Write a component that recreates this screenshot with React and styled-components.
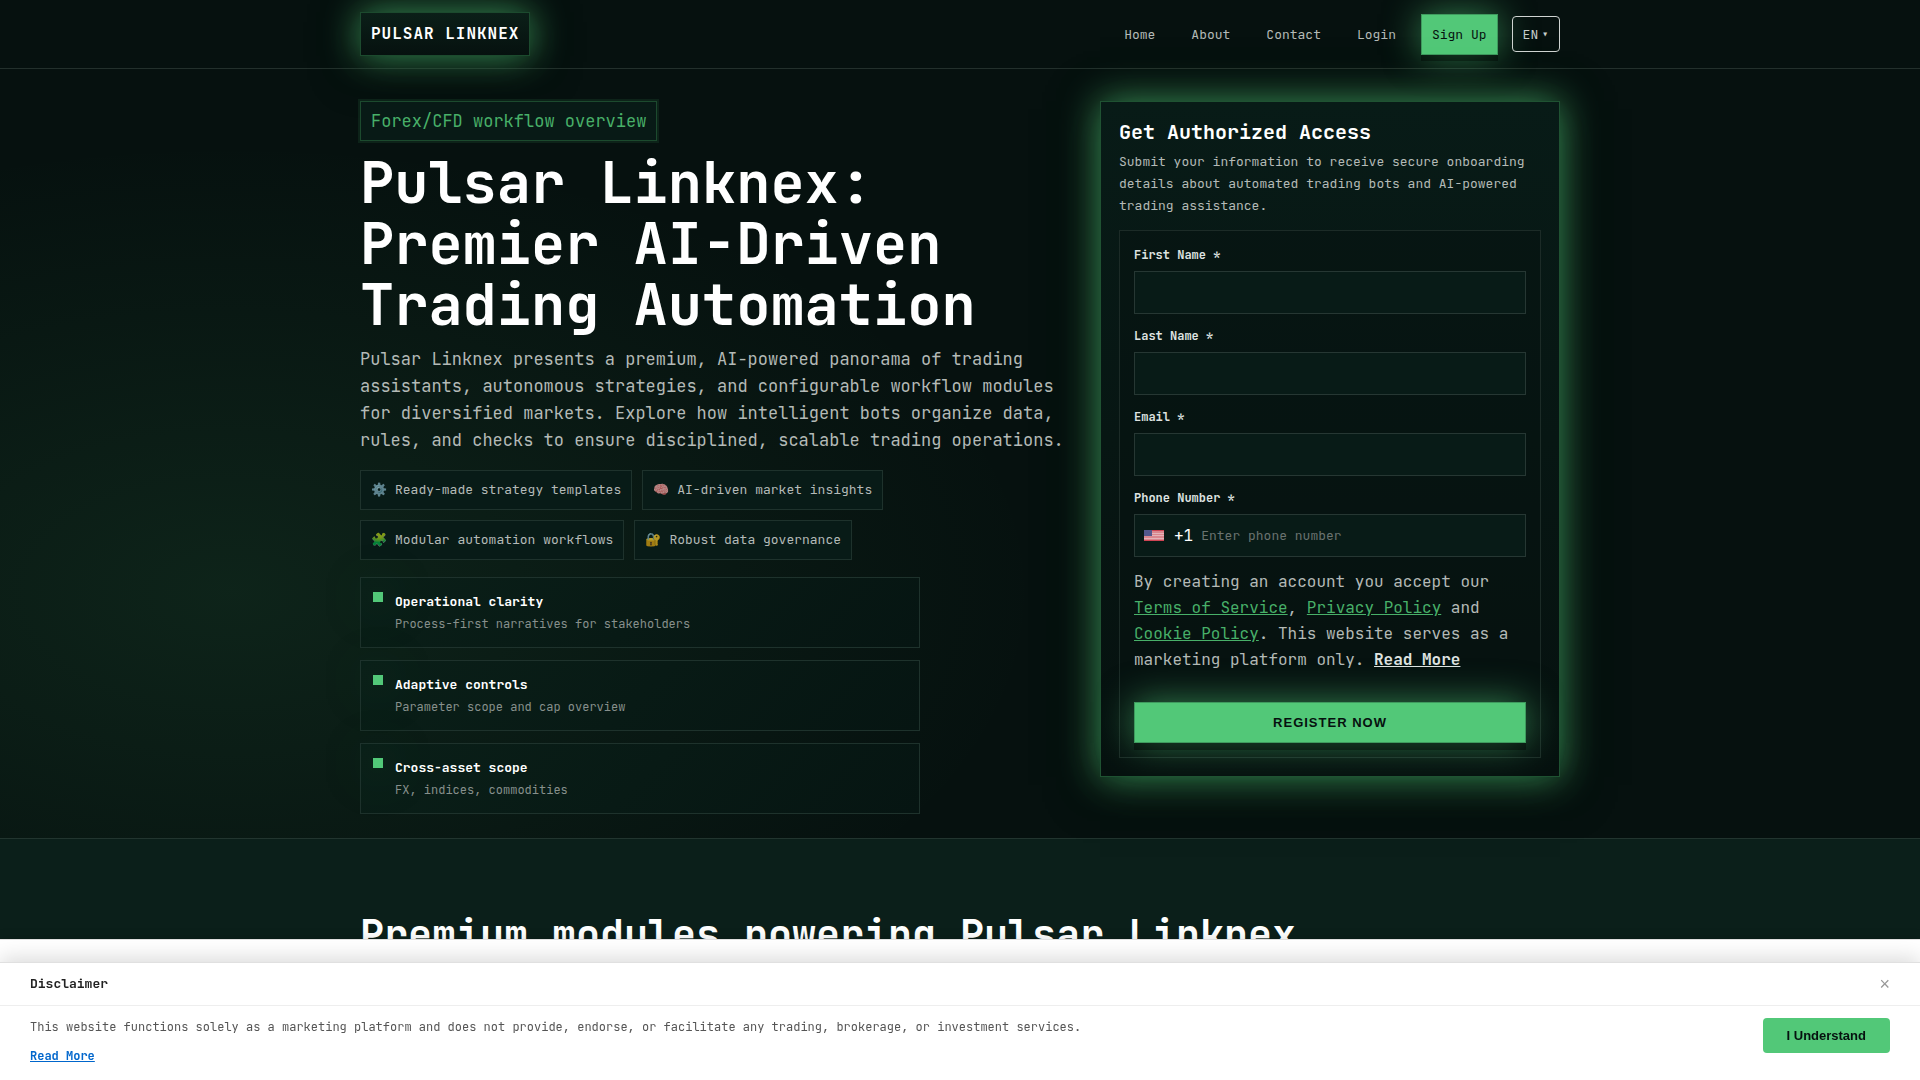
import { useState } from 'react'
import styled, { createGlobalStyle, css } from 'styled-components'

const mono = `'JetBrains Mono', 'DejaVu Sans Mono', monospace`
const sans = `'Liberation Sans', Arial, sans-serif`

const GlobalStyle = createGlobalStyle`
    * {
        box-sizing: border-box;
    }
    body {
        margin: 0;
        overflow: hidden;
        background: #06110f;
        color: #b4bab7;
        font-family: ${mono};
        font-size: 16px;
        line-height: 1.65;
    }
    h1, h2, h3, p, ul {
        margin: 0;
        padding: 0;
    }
`

const glow = css`
    box-shadow: 0 0 36px rgba(82, 200, 120, 0.7), 0 8px 48px rgba(0, 20, 10, 0.5);
`

const Container = styled.div`
    width: 100%;
    max-width: 1200px;
    margin: 0 auto;
`

const Page = styled.div`
    height: 100vh;
    overflow: hidden;
`

const HeaderBar = styled.header`
    padding: 12px 0;
    border-bottom: 1px solid #23302c;
    background: #06110f;
`

const HeaderRow = styled(Container)`
    display: flex;
    justify-content: space-between;
    align-items: center;
`

const Logo = styled.a`
    ${glow}
    padding: 8px 10px;
    border: 1px solid #1c4a2e;
    background: linear-gradient(180deg, #0b1f18, #06110f);
    color: white;
    font-weight: 700;
    line-height: 26px;
    letter-spacing: 1px;
    text-decoration: none;
`

const Nav = styled.nav`
    display: flex;
    align-items: center;
    gap: 14px;
`

const NavLink = styled.a`
    padding: 8px 10px;
    border: 1px solid transparent;
    color: #b4bab7;
    font-size: 13px;
    line-height: 23px;
    text-decoration: none;
`

const SignUp = styled(NavLink)`
    border-color: #3f9a5e;
    background: #52c878;
    color: #06110f;
    box-shadow: 0 6px 0 rgba(0, 0, 0, 0.35), 0 0 36px rgba(82, 200, 120, 0.6);
`

const LangButton = styled.button`
    display: flex;
    align-items: center;
    gap: 3px;
    height: 36px;
    padding: 0 10px;
    border: 1px solid #d0d4d2;
    border-radius: 4px;
    background: transparent;
    color: #c8cdca;
    font-family: ${mono};
    font-size: 13px;
`

const Caret = styled.span`
    font-size: 13px;
`

const Hero = styled.section`
    padding: 32px 0 24px;
    background:
        radial-gradient(900px 500px at 12% 68%, rgba(82, 200, 120, 0.1), transparent 90%),
        #06110f;
`

const HeroGrid = styled(Container)`
    display: grid;
    grid-template-columns: minmax(0, 1fr) 460px;
    gap: 36px;
    align-items: start;
`

const HeroText = styled.div`
    display: flex;
    flex-direction: column;
    align-items: flex-start;
`

const Eyebrow = styled.span`
    padding: 6px 10px;
    border: 1px solid #1c4a2e;
    box-shadow: 0 0 0 2px rgba(82, 200, 120, 0.1);
    background: #081a16;
    color: #48b069;
    font-size: 17px;
    line-height: 26px;
`

const Title = styled.h1`
    margin-top: 11px;
    color: white;
    font-size: 57px;
    font-weight: 700;
    line-height: 61px;
`

const Lead = styled.p`
    margin-top: 11px;
    font-size: 17px;
    line-height: 27px;
`

const Chips = styled.ul`
    display: flex;
    flex-wrap: wrap;
    gap: 10px;
    max-width: 560px;
    margin-top: 16px;
    list-style: none;
`

const Chip = styled.li`
    display: flex;
    gap: 8px;
    padding: 8px 10px;
    border: 1px solid #1e322c;
    background: #081b17;
    font-size: 13px;
    line-height: 22px;
`

const Emoji = styled.span`
    opacity: 0.7;
`

const Points = styled.div`
    display: flex;
    flex-direction: column;
    gap: 12px;
    width: 100%;
    max-width: 560px;
    margin-top: 17px;
`

const Point = styled.div`
    display: flex;
    gap: 12px;
    padding: 12px;
    border: 1px solid #1e322c;
    background: linear-gradient(135deg, #0a1f18, #061512);
`

const Marker = styled.span`
    width: 10px;
    height: 10px;
    margin-top: 2px;
    background: #52c878;
    box-shadow: 0 0 48px rgba(82, 200, 120, 0.5);
`

const PointTitle = styled.h3`
    color: white;
    font-size: 13px;
    font-weight: 700;
    line-height: 24px;
`

const PointText = styled.p`
    color: #87908c;
    font-size: 12px;
    line-height: 21px;
`

const AccessCard = styled.aside`
    ${glow}
    padding: 18px;
    border: 1px solid #1f5232;
    background: linear-gradient(180deg, #081b17, #06110f);
`

const AccessTitle = styled.h2`
    color: white;
    font-size: 20px;
    font-weight: 700;
    line-height: 24px;
`

const AccessText = styled.p`
    margin: 7px 0 13px;
    font-size: 13px;
    line-height: 22px;
`

const Form = styled.form`
    display: flex;
    flex-direction: column;
    padding: 14px;
    border: 1px solid #1c2b27;
    background: rgba(6, 17, 15, 0.5);
`

const Field = styled.div`
    display: flex;
    flex-direction: column;
    gap: 6px;
    margin-bottom: 12px;
`

const Label = styled.label`
    color: #dfe3e1;
    font-size: 12px;
    font-weight: 700;
    line-height: 20px;
`

const inputBox = css`
    width: 100%;
    height: 43px;
    border: 1px solid #263733;
    background: #081b17;
    color: white;
    font-family: ${mono};
    font-size: 13px;
`

const Input = styled.input`
    ${inputBox}
    padding: 0 12px;
`

const PhoneBox = styled.div`
    ${inputBox}
    display: flex;
    align-items: center;
    padding: 0 9px;
`

const Flag = styled.svg`
    width: 20px;
    height: 11px;
    margin-right: 10px;
`

const DialCode = styled.span`
    margin-right: 8px;
    font-size: 16px;
    line-height: 20px;
`

const PhoneInput = styled.input`
    flex: 1;
    min-width: 0;
    padding: 0;
    border: 0;
    outline: 0;
    background: transparent;
    color: white;
    font-family: ${mono};
    font-size: 13px;
    &::placeholder {
        color: #6a7370;
    }
`

const Terms = styled.p`
    line-height: 26px;
`

const TermsLink = styled.a`
    color: ${(props) => (props.$strong ? '#dfe3e1' : '#48b069')};
    font-weight: ${(props) => (props.$strong ? 700 : 400)};
`

const RegisterButton = styled.button`
    height: 41px;
    margin-top: 29px;
    border: 1px solid #3f9a5e;
    background: #52c878;
    color: #06110f;
    box-shadow: 0 7px 0 rgba(0, 0, 0, 0.35), 0 0 36px rgba(82, 200, 120, 0.6);
    font-family: ${sans};
    font-size: 13px;
    font-weight: 700;
    letter-spacing: 1px;
`

const Modules = styled.section`
    height: 400px;
    padding-top: 68px;
    border-top: 1px solid #22352f;
    background: #0b1f1a;
`

const ModulesTitle = styled.h2`
    color: white;
    font-size: 40px;
    line-height: 56px;
`

const CookieBar = styled.div`
    position: fixed;
    left: 0;
    right: 0;
    bottom: 0;
    height: 141px;
    padding-top: 17px;
    border-top: 1px solid #e0e0e0;
    background: white;
    color: #333333;
    box-shadow: 0 -2px 10px rgba(0, 0, 0, 0.1);
`

const Dialog = styled.section`
    position: fixed;
    left: 0;
    right: 0;
    bottom: 0;
    height: 118px;
    border-top: 1px solid #e0e0e0;
    background: white;
    box-shadow: 0 -4px 20px rgba(0, 0, 0, 0.15);
`

const DialogHead = styled.div`
    display: flex;
    justify-content: space-between;
    align-items: center;
    height: 43px;
    padding: 0 30px;
    border-bottom: 1px solid #eeeeee;
`

const DialogTitle = styled.h3`
    color: #222222;
    font-size: 13px;
    font-weight: 700;
`

const CloseButton = styled.button`
    padding: 0;
    border: 0;
    background: none;
    color: #999999;
    font-family: ${sans};
    font-size: 18px;
`

const DialogBody = styled.div`
    display: flex;
    justify-content: space-between;
    align-items: flex-start;
    padding: 12px 30px;
    color: #555555;
    font-size: 12px;
    line-height: 19px;
`

const ReadMore = styled.a`
    display: inline-block;
    margin-top: 10px;
    color: #0066cc;
    font-weight: 700;
`

const ConfirmButton = styled.button`
    height: 35px;
    padding: 0 24px;
    border: 0;
    border-radius: 4px;
    background: #52c878;
    color: #06110f;
    font-family: ${sans};
    font-size: 13px;
    font-weight: 700;
`

const chips = [
    ['⚙️', 'Ready-made strategy templates'],
    ['🧠', 'AI-driven market insights'],
    ['🧩', 'Modular automation workflows'],
    ['🔐', 'Robust data governance'],
]

const points = [
    ['Operational clarity', 'Process-first narratives for stakeholders'],
    ['Adaptive controls', 'Parameter scope and cap overview'],
    ['Cross-asset scope', 'FX, indices, commodities'],
]

const fields = [
    ['first', 'First Name *', 'text'],
    ['last', 'Last Name *', 'text'],
    ['email', 'Email *', 'email'],
]

const UsFlag = () => (
    <Flag viewBox="0 0 20 11" aria-hidden="true">
        <rect width="20" height="11" fill="#d9868e" />
        <path d="M0 .5h20M0 10.500h20" stroke="#cf4453" />
        <path d="M0 3.500h20M0 5.500h20M0 8.500h20" stroke="#e3b3b7" />
        <rect width="8" height="6" fill="#52588c" />
    </Flag>
)

const Header = () => (
    <HeaderBar>
        <HeaderRow>
            <Logo href="#">PULSAR LINKNEX</Logo>
            <Nav>
                <NavLink href="#home">Home</NavLink>
                <NavLink href="#about">About</NavLink>
                <NavLink href="#contact">Contact</NavLink>
                <NavLink href="#login">Login</NavLink>
                <SignUp href="#signup">Sign Up</SignUp>
                <LangButton type="button">
                    EN<Caret>▾</Caret>
                </LangButton>
            </Nav>
        </HeaderRow>
    </HeaderBar>
)

const AccessForm = () => (
    <AccessCard>
        <AccessTitle>Get Authorized Access</AccessTitle>
        <AccessText>
            Submit your information to receive secure onboarding details about automated trading bots and
            AI-powered trading assistance.
        </AccessText>
        <Form onSubmit={(e) => e.preventDefault()}>
            {fields.map(([id, label, type]) => (
                <Field key={id}>
                    <Label htmlFor={id}>{label}</Label>
                    <Input id={id} type={type} />
                </Field>
            ))}
            <Field>
                <Label htmlFor="phone">Phone Number *</Label>
                <PhoneBox>
                    <UsFlag />
                    <DialCode>+1</DialCode>
                    <PhoneInput id="phone" type="tel" placeholder="Enter phone number" />
                </PhoneBox>
            </Field>
            <Terms>
                By creating an account you accept our <TermsLink href="#terms">Terms of Service</TermsLink>,{' '}
                <TermsLink href="#privacy">Privacy Policy</TermsLink> and{' '}
                <TermsLink href="#cookies">Cookie Policy</TermsLink>. This website serves as a marketing platform
                only.{' '}
                <TermsLink href="#more" $strong>
                    Read More
                </TermsLink>
            </Terms>
            <RegisterButton type="submit">REGISTER NOW</RegisterButton>
        </Form>
    </AccessCard>
)

const Disclaimer = ({ onClose }) => (
    <Dialog aria-labelledby="disclaimer-title">
        <DialogHead>
            <DialogTitle id="disclaimer-title">Disclaimer</DialogTitle>
            <CloseButton type="button" aria-label="Close" onClick={onClose}>
                ×
            </CloseButton>
        </DialogHead>
        <DialogBody>
            <div>
                <p>
                    This website functions solely as a marketing platform and does not provide, endorse, or
                    facilitate any trading, brokerage, or investment services.
                </p>
                <ReadMore href="#disclaimer">Read More</ReadMore>
            </div>
            <ConfirmButton type="button" onClick={onClose}>
                I Understand
            </ConfirmButton>
        </DialogBody>
    </Dialog>
)

export default function App() {
    const [open, setOpen] = useState(true)

    return (
        <Page>
            <GlobalStyle />
            <Header />
            <Hero>
                <HeroGrid>
                    <HeroText>
                        <Eyebrow>Forex/CFD workflow overview</Eyebrow>
                        <Title>Pulsar Linknex: Premier AI-Driven Trading Automation</Title>
                        <Lead>
                            Pulsar Linknex presents a premium, AI-powered panorama of trading assistants, autonomous
                            strategies, and configurable workflow modules for diversified markets. Explore how
                            intelligent bots organize data, rules, and checks to ensure disciplined, scalable trading
                            operations.
                        </Lead>
                        <Chips>
                            {chips.map(([emoji, text]) => (
                                <Chip key={text}>
                                    <Emoji>{emoji}</Emoji>
                                    {text}
                                </Chip>
                            ))}
                        </Chips>
                        <Points>
                            {points.map(([title, text]) => (
                                <Point key={title}>
                                    <Marker />
                                    <div>
                                        <PointTitle>{title}</PointTitle>
                                        <PointText>{text}</PointText>
                                    </div>
                                </Point>
                            ))}
                        </Points>
                    </HeroText>
                    <AccessForm />
                </HeroGrid>
            </Hero>
            <Modules>
                <Container>
                    <ModulesTitle>Premium modules powering Pulsar Linknex</ModulesTitle>
                </Container>
            </Modules>
            <CookieBar>
                <Container>
                    <p>
                        We use cookies to enhance your browsing experience. By continuing to use our website, you agree
                        to the use of cookies.
                    </p>
                </Container>
            </CookieBar>
            {open && <Disclaimer onClose={() => setOpen(false)} />}
        </Page>
    )
}
